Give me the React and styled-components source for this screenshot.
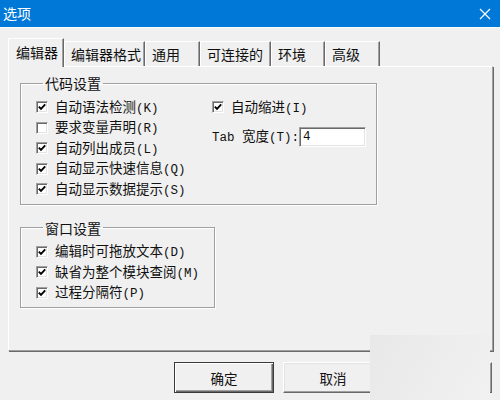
import React from "react";
import styled, { createGlobalStyle, css } from "styled-components";

const Global = createGlobalStyle`
  html, body {
    margin: 0;
    padding: 0;
    background: #f0f0f0;
  }
  * {
    box-sizing: border-box;
  }
`;

const Window = styled.div`
  position: relative;
  width: 500px;
  height: 400px;
  overflow: hidden;
  background: #f0f0f0;
  font-family: "Noto Sans CJK SC", "Liberation Sans", sans-serif;
  color: #111;
  display: flex;
  flex-direction: column;
`;

const TitleBar = styled.div`
  height: 28px;
  background: #0078d7;
  border-bottom: 1px solid #f6fbfb;
  display: flex;
  align-items: center;
  justify-content: space-between;
  padding: 0 9px 0 3px;
  flex-shrink: 0;
`;

const Title = styled.span`
  color: #fff;
  font-size: 14px;
  line-height: 16px;
  margin-top: -2px;
`;

const Body = styled.div`
  flex: 1;
  padding: 9px 7px 0 8px;
  display: flex;
  flex-direction: column;
`;

const TabStrip = styled.div`
  height: 29px;
  display: flex;
  align-items: flex-end;
  position: relative;
  z-index: 1;
`;

const Tab = styled.div`
  width: ${(p) => p.$w}px;
  height: 25px;
  padding-left: 6px;
  display: flex;
  align-items: center;
  font-size: 14px;
  line-height: 16px;
  border-top: 1px solid #fff;
  border-left: 1px solid #fff;
  border-right: 1px solid #696969;
  box-shadow: inset -1px 0 0 #a0a0a0;
  ${(p) =>
    p.$active &&
    css`
      height: 29px;
      margin-bottom: -1px;
      background: #f0f0f0;
      padding-left: 7px;
      padding-bottom: 2px;
    `}
`;

const Panel = styled.div`
  height: 285px;
  border-top: 1px solid #fff;
  border-left: 1px solid #fff;
  border-right: 1px solid #a0a0a0;
  border-bottom: 1px solid #a0a0a0;
  box-shadow: 1px 1px 0 #696969;
  padding: 8px 0 0 11px;
  display: flex;
  flex-direction: column;
  align-items: flex-start;
  gap: 15px;
`;

const Group = styled.fieldset`
  width: ${(p) => p.$w}px;
  margin: 0;
  padding: 6px 0 4px 15px;
  border: 1px solid #a0a0a0;
  box-shadow: inset 1px 1px 0 #fff, 1px 1px 0 #fff;
  min-width: 0;
`;

const Legend = styled.legend`
  font-size: 14px;
  line-height: 16px;
  padding: 0 2px;
  margin-left: 7px;
`;

const Columns = styled.div`
  display: grid;
  grid-template-columns: 176px 1fr;
`;

const Column = styled.div`
  display: flex;
  flex-direction: column;
`;

const Row = styled.label`
  height: 20.5px;
  display: flex;
  align-items: center;
  gap: 7px;
  font-size: 13.5px;
  line-height: 16px;
  white-space: nowrap;
`;

const Latin = styled.span`
  font-family: "Liberation Mono", "DejaVu Sans Mono", monospace;
  font-size: 12.5px;
`;

const Box = styled.span`
  width: 12px;
  height: 12px;
  flex-shrink: 0;
  background: #fff;
  border: 1px solid;
  border-color: #a0a0a0 #fff #fff #a0a0a0;
  box-shadow: inset 1px 1px 0 #696969, inset -1px -1px 0 #e3e3e3;
  display: flex;
  align-items: center;
  justify-content: center;
`;

const FieldRow = styled.div`
  margin-top: 9px;
  height: 20px;
  display: flex;
  align-items: center;
  gap: 0;
  font-size: 13.5px;
  line-height: 16px;
  white-space: nowrap;
`;

const TextInput = styled.div`
  width: 67px;
  height: 20px;
  background: #fff;
  border: 1px solid;
  border-color: #a0a0a0 #fff #fff #a0a0a0;
  box-shadow: inset 1px 1px 0 #696969, inset -1px -1px 0 #e3e3e3;
  padding: 1px 0 0 3px;
  font-family: "Liberation Mono", monospace;
  font-size: 12.5px;
  line-height: 16px;
`;

const ButtonRow = styled.div`
  margin-top: 11px;
  display: flex;
  justify-content: flex-end;
  gap: 9px;
  padding-right: 1px;
`;

const Button = styled.div`
  width: 100px;
  height: 31px;
  display: flex;
  align-items: center;
  justify-content: center;
  font-size: 13.5px;
  line-height: 16px;
  background: #f0f0f0;
  border: 1px solid;
  border-color: #fff #696969 #696969 #fff;
  box-shadow: inset -1px -1px 0 #a0a0a0, inset 1px 1px 0 #e3e3e3;
  ${(p) =>
    p.$default &&
    css`
      border-color: #3a3a3a;
      box-shadow: inset 1px 1px 0 #fff, inset -1px -1px 0 #696969,
        inset -2px -2px 0 #a0a0a0;
    `}
`;

const Smudge = styled.div`
  position: absolute;
  left: 370px;
  top: 335px;
  width: 120px;
  height: 65px;
  background: linear-gradient(120deg, #e8e8e8 0%, #ececec 45%, #f1f1f1 100%);
`;

const Close = () => (
  <svg width="12" height="12" viewBox="0 0 12 12">
    <path d="M1 1 L11 11 M11 1 L1 11" stroke="#fff" strokeWidth="1.2" fill="none" />
  </svg>
);

const Check = () => (
  <svg width="8" height="8" viewBox="0 0 8 8">
    <polyline points="0.8,3.6 3,5.8 7.2,1.4" stroke="#000" strokeWidth="1.9" fill="none" />
  </svg>
);

const Txt = ({ children }) =>
  children
    .split(/([\x00-\x7f]+)/)
    .filter(Boolean)
    .map((s, i) =>
      /[\x00-\x7f]/.test(s) ? <Latin key={i}>{s}</Latin> : <span key={i}>{s}</span>
    );

const CheckRow = ({ checked, label }) => (
  <Row>
    <Box>{checked && <Check />}</Box>
    <span>
      <Txt>{label}</Txt>
    </span>
  </Row>
);

const tabs = [
  { label: "编辑器", w: 56 },
  { label: "编辑器格式", w: 81 },
  { label: "通用", w: 55 },
  { label: "可连接的", w: 71 },
  { label: "环境", w: 54 },
  { label: "高级", w: 55 },
];

const codeOptions = [
  { label: "自动语法检测(K)", checked: true },
  { label: "要求变量声明(R)", checked: false },
  { label: "自动列出成员(L)", checked: true },
  { label: "自动显示快速信息(Q)", checked: true },
  { label: "自动显示数据提示(S)", checked: true },
];

const windowOptions = [
  { label: "编辑时可拖放文本(D)", checked: true },
  { label: "缺省为整个模块查阅(M)", checked: true },
  { label: "过程分隔符(P)", checked: true },
];

export default function App() {
  return (
    <>
      <Global />
      <Window>
        <TitleBar>
          <Title>选项</Title>
          <Close />
        </TitleBar>
        <Body>
          <TabStrip>
            {tabs.map((t, i) => (
              <Tab key={t.label} $w={t.w} $active={i === 0}>
                {t.label}
              </Tab>
            ))}
          </TabStrip>
          <Panel>
            <Group $w={357}>
              <Legend>代码设置</Legend>
              <Columns>
                <Column>
                  {codeOptions.map((o) => (
                    <CheckRow key={o.label} {...o} />
                  ))}
                </Column>
                <Column>
                  <CheckRow label="自动缩进(I)" checked />
                  <FieldRow>
                    <span>
                      <Txt>Tab 宽度(T):</Txt>
                    </span>
                    <TextInput>4</TextInput>
                  </FieldRow>
                </Column>
              </Columns>
            </Group>
            <Group $w={195}>
              <Legend>窗口设置</Legend>
              <Column>
                {windowOptions.map((o) => (
                  <CheckRow key={o.label} {...o} />
                ))}
              </Column>
            </Group>
          </Panel>
          <ButtonRow>
            <Button $default>确定</Button>
            <Button>取消</Button>
            <Button>帮助</Button>
          </ButtonRow>
        </Body>
        <Smudge />
      </Window>
    </>
  );
}
